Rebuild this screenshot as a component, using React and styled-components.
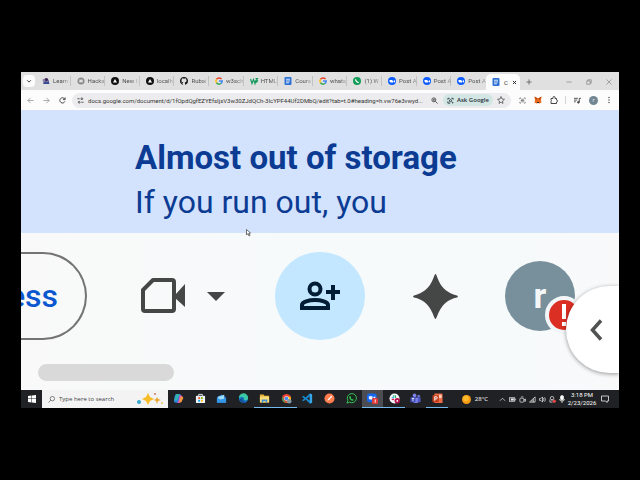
import React from "react";
import styled, { createGlobalStyle } from "styled-components";

const Global = createGlobalStyle`
  * { box-sizing: border-box; }
  body { margin: 0; background: #000; font-family: "Open Sans", "Noto Sans", sans-serif; }
  button, input { font: inherit; color: inherit; border: 0; padding: 0; margin: 0; background: none; outline: 0; }
  button { display: flex; align-items: center; justify-content: center; flex: none; }
  svg { display: block; flex: none; overflow: visible; }
`;

const Page = styled.main`
  min-height: 100vh;
  padding: 72px 21px;
  background: #000;
`;
const Desktop = styled.div`
  position: relative;
  overflow: hidden;
  background: #f9fafb;
`;

/* Browser chrome */
const TabStrip = styled.header`
  display: flex;
  align-items: flex-end;
  height: 18px;
  background: #e0e0e0;
  color: #444;
  font-family: Roboto, sans-serif;
  font-size: 6px;
`;
const TabSearch = styled.button`
  width: 12px;
  height: 12px;
  margin: 0 1px 3px 2px;
  border-radius: 4px;
  background: #fcfcfc;
`;
const Tabs = styled.nav`
  display: flex;
  flex: 0 1 450px;
  min-width: 0;
`;
const Tab = styled.a`
  display: flex;
  flex: 1 1 0;
  min-width: 0;
  align-items: center;
  gap: 3px;
  height: 10px;
  margin-bottom: 4px;
  padding-left: 6px;
  border-right: 1px solid #c3c3c3;
  color: #505050;
  text-decoration: none;
  &:last-child { border-color: transparent; }
`;
const TabLabel = styled.span`
  white-space: nowrap;
  line-height: 10px;
  mask-image: linear-gradient(90deg, #000 60%, rgba(0, 0, 0, 0.3));
`;
const ActiveTab = styled.div`
  display: flex;
  align-items: center;
  gap: 4px;
  width: 34px;
  height: 16px;
  padding: 0 4px 0 6px;
  border-radius: 5px 5px 0 0;
  background: #fcfcfd;
  color: #333;
`;
const NewTab = styled.button`
  width: 18px;
  height: 16px;
`;
const WindowControls = styled.div`
  display: flex;
  margin-left: auto;
`;
const WindowButton = styled.button`
  width: 20px;
  height: 17px;
`;
const Toolbar = styled.div`
  display: flex;
  align-items: center;
  height: 20px;
  padding: 0 6px 0 1px;
  background: #fcfcfd;
  color: #444;
`;
const ToolButton = styled.button`
  width: ${(p) => p.$w || 16}px;
  height: 16px;
`;
const Omnibox = styled.form`
  display: flex;
  flex: 1 1 0;
  min-width: 0;
  align-items: center;
  height: 15px;
  margin: 0 4px 0 2px;
  padding: 0 2px;
  border-radius: 8px;
  background: #ececee;
`;
const UrlInput = styled.input`
  flex: 1 1 0;
  min-width: 0;
  height: 13px;
  margin-left: 2px;
  color: #333;
  font-family: Roboto, sans-serif;
  font-size: 6px;
`;
const AskGoogle = styled.button`
  gap: 3px;
  height: 12px;
  padding: 0 4px;
  border-radius: 6px;
  background: #d3e6e4;
  color: #263238;
  font-size: 6px;
  font-weight: 600;
`;
const Divider = styled.span`
  width: 1px;
  height: 8px;
  margin: 0 3px;
  background: #d3d3d3;
`;
const Profile = styled.button`
  width: 9px;
  height: 9px;
  margin: 0 6px 0 4px;
  border-radius: 50%;
  background: #718692;
  color: #fff;
  font-size: 5px;
`;

/* Document page */
const Banner = styled.section`
  height: 123px;
  padding: 26px 114px;
  background: #d3e3fd;
  color: #0b3b93;
  font-family: Roboto, sans-serif;
  white-space: nowrap;
`;
const BannerTitle = styled.h1`
  margin: 0;
  font-size: 33px;
  line-height: 44px;
  font-weight: 700;
`;
const BannerText = styled.p`
  margin: 0;
  font-size: 32px;
  line-height: 44px;
`;
const DocHeader = styled.section`
  position: relative;
  padding: 19px 0 9px;
  background: linear-gradient(90deg, #f9f9f9, #f6fafb 55%, #f6fafb 80%, #f9f9fa);
`;
const Actions = styled.div`
  display: flex;
  align-items: center;
  height: 88px;
`;
const PillButton = styled.button`
  && { justify-content: flex-end; }
  width: 66px;
  height: 88px;
  padding-right: 27px;
  overflow: hidden;
  border: 2px solid #747474;
  border-left: 0;
  border-radius: 0 44px 44px 0;
  color: #0b57d0;
  font-family: Roboto, sans-serif;
  font-size: 32px;
  font-weight: 500;
`;
const VideoButton = styled.button`
  margin-left: 54px;
`;
const CaretButton = styled.button`
  margin-left: 22px;
`;
const ShareButton = styled.button`
  width: 90px;
  height: 88px;
  margin-left: 50px;
  border-radius: 50%;
  background: #c2e7ff;
`;
const SparkButton = styled.button`
  margin-left: 48px;
`;
const Account = styled.button`
  position: relative;
  width: 70px;
  height: 70px;
  margin-left: 47px;
  border-radius: 50%;
  background: #78909c;
  color: #f4f7f8;
  font-family: Roboto, sans-serif;
  font-size: 35px;
  font-weight: 700;
`;
const AlertBadge = styled.span`
  position: absolute;
  right: -8px;
  bottom: -3px;
  display: flex;
  align-items: center;
  justify-content: center;
  width: 38px;
  height: 38px;
  border: 4px solid #f3f6f8;
  border-radius: 50%;
  background: #dc2f24;
`;
const SidePanelToggle = styled.button`
  && { justify-content: flex-start; }
  position: absolute;
  top: 53px;
  right: 0;
  width: 53px;
  height: 87px;
  padding-left: 24px;
  border-radius: 44px 0 0 44px;
  background: #fff;
  box-shadow: 0 1px 4px rgba(0, 0, 0, 0.4);
`;
const ScrollThumb = styled.div`
  width: 136px;
  height: 17px;
  margin: 24px 0 0 17px;
  border-radius: 9px;
  background: #d9d9d9;
`;
const Pointer = styled.svg`
  position: absolute;
  left: 225px;
  top: 157px;
`;

/* Taskbar */
const Taskbar = styled.footer`
  display: flex;
  height: 18px;
  background: #202124;
  color: #fff;
`;
const StartButton = styled.button`
  width: 21px;
`;
const SearchBox = styled.label`
  display: flex;
  flex: none;
  align-items: center;
  gap: 4px;
  width: 126px;
  padding: 0 4px 0 6px;
  background: #f3f3f3;
  color: #555;
`;
const SearchInput = styled.input`
  flex: 1;
  min-width: 0;
  font-size: 6px;
  &::placeholder { color: #444; opacity: 1; }
`;
const Apps = styled.nav`
  display: flex;
  flex: 0 1 280px;
`;
const AppButton = styled.button`
  && { flex: 1 1 0; }
  height: 18px;
  background: ${(p) => (p.$active ? "#4b4d52" : "transparent")};
  border-bottom: 1px solid ${(p) => (p.$open ? "#76b9ed" : "transparent")};
`;
const Tray = styled.div`
  display: flex;
  flex: 1;
  align-items: center;
  justify-content: flex-end;
  color: #fff;
  font-size: 6px;
`;
const Weather = styled.button`
  gap: 4px;
  margin-right: 9px;
`;
const TrayButton = styled.button`
  width: ${(p) => p.$w || 10}px;
  height: 18px;
`;
const Clock = styled.time`
  width: 30px;
  font-family: Roboto, sans-serif;
  font-size: 6px;
  line-height: 8px;
  text-align: center;
  white-space: nowrap;
`;

const Stroke = ({ size = 8, d, width = 1.6, color = "#555" }) => (
  <svg width={size} height={size} viewBox="0 0 16 16" fill="none" stroke={color} strokeWidth={width}>
    <path d={d} />
  </svg>
);

const CLOSE = "M3 3l10 10M13 3L3 13";

const favicons = {
  learn: (
    <>
      <path d="M1 5l7-3 6 4v8H3z" fill="#8a7fa8" />
      <circle cx="9" cy="5" r="3" fill="#33224e" />
      <path d="M2 14l5-6 3 3 3-3 2 6z" fill="#344a95" />
    </>
  ),
  hack: (
    <>
      <circle cx="8" cy="8" r="7" fill="#8a8a8a" />
      <path d="M5 5h2v2h2V5h2v6H9V9H7v2H5z" fill="#fff" />
    </>
  ),
  next: (
    <>
      <circle cx="8" cy="8" r="8" fill="#111" />
      <path d="M8 4l4 7H4z" fill="#fff" />
    </>
  ),
  github: (
    <path
      fill="#181717"
      d="M8 0a8 8 0 0 0-2.5 15.6c.4 0 .5-.2.5-.4v-2c-2.2.5-2.7-1-2.7-1-.4-.8-.9-1-.9-1-.7-.6.1-.6.1-.6.8.1 1.2.8 1.2.8.7 1.3 1.9.9 2.4.7 0-.5.2-.9.5-1.1-1.8-.2-3.7-.9-3.7-4 0-.9.3-1.6.8-2.1 0-.3-.3-1.1.1-2.2 0 0 .7-.2 2.2.8a8 8 0 0 1 4 0c1.5-1 2.2-.8 2.2-.8.4 1.1.1 1.9.1 2.2.5.5.8 1.2.8 2.1 0 3.1-1.9 3.8-3.7 4 .3.3.6.8.6 1.5v2.7c0 .2.1.5.5.4A8 8 0 0 0 8 0z"
    />
  ),
  google: (
    <g fill="none" strokeWidth="3">
      <path d="M13 4A6.3 6.3 0 0 0 3 4.5" stroke="#ea4335" />
      <path d="M3 4.5a6.3 6.3 0 0 0 0 7" stroke="#fbbc05" />
      <path d="M3 11.5A6.3 6.3 0 0 0 12 13" stroke="#34a853" />
      <path d="M12 13a6.3 6.3 0 0 0 2.3-5H8" stroke="#4285f4" />
    </g>
  ),
  w3: (
    <path d="M1 4l3 9 3-8 3 8 2-7M11 3h4l-2 3 2 2-3 3" fill="none" stroke="#16995d" strokeWidth="2.4" />
  ),
  docs: (
    <>
      <rect x="1" y="0" width="14" height="16" rx="2" fill="#2f72d6" />
      <path d="M4 4.5h8M4 8h8M4 11.5h6" stroke="#fff" strokeWidth="1.6" />
    </>
  ),
  whatsapp: (
    <>
      <circle cx="8" cy="8" r="8" fill="#139c57" />
      <path d="M6 4l1 3 2 2 3 1-1 2c-4 0-7-4-7-7z" fill="#fff" />
    </>
  ),
  zoom: (
    <>
      <circle cx="8" cy="8" r="8" fill="#0b5cff" />
      <path d="M3 6h5l2 2v3H5L3 9zM11 8l3-2v5l-3-1z" fill="#fff" />
    </>
  ),
};

const Favicon = ({ kind, size = 8 }) => (
  <svg width={size} height={size} viewBox="0 0 16 16">{favicons[kind]}</svg>
);

const tabs = [
  ["learn", "Learn"],
  ["hack", "Hacka"],
  ["next", "New I"],
  ["next", "localh"],
  ["github", "Rubai"],
  ["google", "w3sch"],
  ["w3", "HTML"],
  ["docs", "Cours"],
  ["google", "whats"],
  ["whatsapp", "(1) W"],
  ["zoom", "Post A"],
  ["zoom", "Post A"],
  ["zoom", "Post A"],
];

const apps = [
  {
    name: "Copilot",
    art: (
      <>
        <path d="M7 2h8q2 0 2 3l-4 12q-1 4-4 4H7q-6 0-5-6l2-9q1-4 3-4z" fill="#2a86d9" />
        <path d="M7 2h7l-5 14H3z" fill="#35b5a9" />
        <path d="M14 5h4l4 5-4 9q-2 3-6 3H8q3-1 4-5z" fill="#d55ac1" />
        <path d="M17 7q6 0 5 5l-4 8h-5z" fill="#f4953b" />
      </>
    ),
  },
  {
    name: "Store",
    art: (
      <>
        <path d="M8 6V3h8v3" fill="none" stroke="#e8edf2" strokeWidth="2" />
        <rect x="2" y="6" width="20" height="16" rx="2" fill="#edf3f8" />
        <path d="M7 9h4v4H7z" fill="#f35325" /><path d="M13 9h4v4h-4z" fill="#81bc06" />
        <path d="M7 15h4v4H7z" fill="#05a6f0" /><path d="M13 15h4v4h-4z" fill="#ffba08" />
      </>
    ),
  },
  {
    name: "Mail",
    art: (
      <>
        <path d="M2 9l10-6 10 6v12H2z" fill="#1769c5" />
        <path d="M4 8l14-4v9L4 16z" fill="#9edcf8" />
        <path d="M2 10l10 6 10-6v11H2z" fill="#3498e7" />
      </>
    ),
  },
  {
    name: "Edge",
    art: (
      <>
        <circle cx="12" cy="12" r="10" fill="#1878c8" />
        <path d="M2 11a10 10 0 0 1 20-1c1 6-6 7-9 4 3-4-4-8-11-3z" fill="#3bc9a8" />
        <path d="M10 11c-2 5 3 9 9 8-5 5-14 3-15-3 0-3 3-5 6-5z" fill="#135193" />
      </>
    ),
  },
  {
    name: "File Explorer",
    open: true,
    art: (
      <>
        <path d="M2 3h8l2 3h10v15H2z" fill="#e9b73b" />
        <path d="M2 8h20v12H2z" fill="#fbdc78" />
        <path d="M6 14h12v7h-3v-3H9v3H6z" fill="#3e91d2" />
      </>
    ),
  },
  {
    name: "Chrome",
    open: true,
    art: (
      <>
        <circle cx="12" cy="12" r="10" fill="#e94235" />
        <path d="M3 8l6 12 3 2A10 10 0 0 1 3 8z" fill="#34a853" />
        <path d="M12 8h9a10 10 0 0 1-9 14l4-8z" fill="#fbbc05" />
        <circle cx="12" cy="12" r="5" fill="#fff" /><circle cx="12" cy="12" r="4" fill="#4285f4" />
        <circle cx="18" cy="18" r="5" fill="#8198a3" />
      </>
    ),
  },
  {
    name: "Visual Studio Code",
    art: (
      <>
        <path d="M17 1l5 2v18l-5 2L8 14l-5 4-2-1v-2l4-3-4-3V7l2-1 5 4zM17 7l-6 5 6 5z" fill="#1689cf" fillRule="evenodd" />
        <path d="M17 1l5 2v18l-5 2z" fill="#37a5e8" />
      </>
    ),
  },
  {
    name: "Postman",
    art: (
      <>
        <circle cx="12" cy="12" r="11" fill="#ff7d4d" />
        <path d="M7 17l2-4 7-7 2 2-7 7z" fill="#fff" />
      </>
    ),
  },
  {
    name: "WhatsApp",
    art: (
      <>
        <path d="M2 22l2-6a10 10 0 1 1 4 4z" fill="#17291c" stroke="#3cc85a" strokeWidth="2" />
        <path d="M8 7h2l1 3-1 1 3 3 2-1 2 2-2 2c-4 0-8-4-8-8z" fill="#3cc85a" />
      </>
    ),
  },
  {
    name: "Zoom",
    open: true,
    active: true,
    art: (
      <>
        <rect x="0" y="1" width="21" height="19" rx="5" fill="#1768ef" />
        <path d="M4 7h8v7H6l-2-2zM14 9l4-2v6l-4-1z" fill="#fff" />
        <rect x="11" y="11" width="13" height="13" rx="3" fill="#e23b3b" />
        <path d="M18 14v7" stroke="#fff" strokeWidth="2" />
      </>
    ),
  },
  {
    name: "Slack",
    open: true,
    art: (
      <>
        <circle cx="12" cy="12" r="11" fill="#f8f8f8" />
        <path d="M6 10h5" stroke="#36c5f0" strokeWidth="3" /><path d="M10 5v3" stroke="#2eb67d" strokeWidth="3" />
        <path d="M14 5v6" stroke="#2eb67d" strokeWidth="3" /><path d="M6 14h5" stroke="#e01e5a" strokeWidth="3" />
        <circle cx="18" cy="17" r="6" fill="#b4144d" /><circle cx="18" cy="17" r="2" fill="#fff" />
      </>
    ),
  },
  {
    name: "Teams",
    art: (
      <>
        <circle cx="10" cy="5" r="4" fill="#7b83eb" /><circle cx="19" cy="7" r="3" fill="#646ccc" />
        <path d="M15 10h8v10h-6z" fill="#5059c9" /><path d="M4 10h13v12H8z" fill="#7b83eb" />
        <rect x="1" y="9" width="11" height="11" rx="1" fill="#4550b8" />
        <path d="M4 12h5M6.500 12v6" stroke="#fff" strokeWidth="1.6" />
      </>
    ),
  },
  {
    name: "PowerPoint",
    open: true,
    art: (
      <>
        <rect x="5" y="1" width="18" height="21" rx="1" fill="#ed6c47" />
        <path d="M15 4h6v7h-6z" fill="#ffd1bf" />
        <rect x="1" y="5" width="14" height="15" rx="1" fill="#c43e1c" />
        <path d="M6 17V8h3a2 2 0 0 1 0 5H6" fill="none" stroke="#fff" strokeWidth="2" />
      </>
    ),
  },
];

const TrayIcon = ({ children, size = 7 }) => (
  <svg width={size} height={size} viewBox="0 0 16 16" fill="none" stroke="#eee" strokeWidth="1.6">{children}</svg>
);

function BrowserTabs() {
  return (
    <TabStrip>
      <TabSearch aria-label="Search tabs"><Stroke size={6} d="M3 6l5 5 5-5" width={2.5} color="#333" /></TabSearch>
      <Tabs aria-label="Open tabs">
        {tabs.map(([kind, label], i) => (
          <Tab href="#" key={i}><Favicon kind={kind} /><TabLabel>{label}</TabLabel></Tab>
        ))}
      </Tabs>
      <ActiveTab>
        <Favicon kind="docs" />
        <span>C</span>
        <button aria-label="Close tab"><Stroke size={5} d={CLOSE} width={3} color="#222" /></button>
      </ActiveTab>
      <NewTab aria-label="New tab"><Stroke size={6} d="M8 1v14M1 8h14" width={2} /></NewTab>
      <WindowControls>
        <WindowButton aria-label="Minimize"><Stroke size={6} d="M1 8h14" color="#777" /></WindowButton>
        <WindowButton aria-label="Restore"><Stroke size={6} d="M2 5h9v9H2zM5 5V2h9v9h-3" color="#777" /></WindowButton>
        <WindowButton aria-label="Close"><Stroke size={6} d="M1 1l14 14M15 1L1 15" color="#777" /></WindowButton>
      </WindowControls>
    </TabStrip>
  );
}

function BrowserToolbar() {
  return (
    <Toolbar>
      <ToolButton aria-label="Back"><Stroke size={7} d="M15 8H2M8 2L2 8l6 6" color="#888" /></ToolButton>
      <ToolButton aria-label="Forward"><Stroke size={7} d="M1 8h13M8 2l6 6-6 6" color="#888" /></ToolButton>
      <ToolButton aria-label="Reload"><Stroke size={7} d="M13.5 10A6 6 0 1 1 13 4.500M14 1v5H9" width={2} color="#333" /></ToolButton>
      <Omnibox onSubmit={(e) => e.preventDefault()}>
        <ToolButton $w={12} type="button" aria-label="Site information">
          <Stroke size={7} d="M1 4h5M9 4a2 2 0 1 0 4 0 2 2 0 0 0-4 0M15 12h-5M3 12a2 2 0 1 0 4 0 2 2 0 0 0-4 0" width={2} color="#444" />
        </ToolButton>
        <UrlInput
          aria-label="Address"
          defaultValue="docs.google.com/document/d/1fOpdQgfEZYEfsIjsV3w30ZJdQCh-3IcYPF44Uf2DMbQ/edit?tab=t.0#heading=h.vw76e3vwyd..."
        />
        <ToolButton $w={16} type="button" aria-label="Zoom">
          <Stroke size={7} d="M11 6.5a4.500 4.500 0 1 0-9 0 4.500 4.500 0 0 0 9 0M10 10l5 5M4.500 6.500h4M6.500 4.500v4" width={2} color="#444" />
        </ToolButton>
        <AskGoogle type="button">
          <svg width="7" height="7" viewBox="0 0 16 16" fill="none" stroke="#263238" strokeWidth="2">
            <path d="M2 6V3h4M10 3h4v3M2 10v4h5" /><circle cx="8" cy="8.5" r="2.5" /><circle cx="13" cy="13" r="1" />
          </svg>
          Ask Google
        </AskGoogle>
        <ToolButton $w={16} type="button" aria-label="Bookmark">
          <Stroke size={8} d="M8 1l2 5 5 .5-4 3.500 1 5-4-3-4 3 1-5-4-3.500L6 6z" />
        </ToolButton>
      </Omnibox>
      <ToolButton $w={14} aria-label="Extension">
        <Stroke size={7} d="M4 2H2v3M12 2h2v3M4 14H2v-3M12 14h2v-3M4 8h8M5 5h6M5 11h6" />
      </ToolButton>
      <ToolButton $w={17} aria-label="MetaMask">
        <svg width="8" height="8" viewBox="0 0 16 16">
          <path d="M1 1l5 3h4l5-3-1 8 1 4-4 2-3-1-3 1-4-2 1-4z" fill="#e8691e" />
          <path d="M1 1l5 3-1 4zM15 1l-5 3 1 4z" fill="#9f3d12" /><path d="M6 12h4v2H6z" fill="#3c241b" />
        </svg>
      </ToolButton>
      <ToolButton aria-label="Extensions">
        <Stroke size={8} d="M2 5h4V3a2 2 0 0 1 4 0v2h3v3a2 2 0 0 1 0 4v3H2v-4a2 2 0 0 0 0-3z" width={2} color="#444" />
      </ToolButton>
      <Divider />
      <ToolButton aria-label="Media controls">
        <svg width="7" height="7" viewBox="0 0 16 16" fill="none" stroke="#444" strokeWidth="2">
          <path d="M0 3h9M0 7h7M0 11h4M12 12V3h4" /><circle cx="10" cy="12" r="2" fill="#444" />
        </svg>
      </ToolButton>
      <Profile aria-label="Profile">r</Profile>
      <ToolButton $w={9} aria-label="Menu">
        <svg width="8" height="8" viewBox="0 0 16 16" fill="#555">
          <circle cx="8" cy="3" r="1.5" /><circle cx="8" cy="8" r="1.5" /><circle cx="8" cy="13" r="1.5" />
        </svg>
      </ToolButton>
    </Toolbar>
  );
}

function DocumentHeader() {
  return (
    <DocHeader>
      <Actions>
        <PillButton>ess</PillButton>
        <VideoButton aria-label="Start a call">
          <svg width="44" height="36" viewBox="0 0 44 36">
            <path d="M12 2h19q2 0 2 2v27q0 2-2 2H4q-2 0-2-2V12z" fill="none" stroke="#444746" strokeWidth="4" strokeLinejoin="round" />
            <path d="M34 17L44 6v23L34 20z" fill="#444746" />
          </svg>
        </VideoButton>
        <CaretButton aria-label="Call options">
          <svg width="18" height="9" viewBox="0 0 18 9"><path d="M0 0h18L9 9z" fill="#444746" /></svg>
        </CaretButton>
        <ShareButton aria-label="Share">
          <svg width="40" height="30" viewBox="0 0 40 30" fill="none" stroke="#001d35" strokeWidth="4">
            <ellipse cx="15" cy="8" rx="5.5" ry="5.5" />
            <path d="M2 27v-3c0-3 7-5 13-5s13 2 13 5v3z" /><path d="M33 4v15M26 11h14" />
          </svg>
        </ShareButton>
        <SparkButton aria-label="Gemini">
          <svg width="45" height="45" viewBox="0 0 45 45">
            <path d="M22.5 0C24.500 0 25 17 44 21.500c1.200.5 1.200 1.500 0 2C26 27 24.500 45 22.500 45S19 27 1 23.500c-1.200-.5-1.200-1.500 0-2C20 17 20.500 0 22.500 0z" fill="#444746" />
          </svg>
        </SparkButton>
        <Account aria-label="Account">
          r
          <AlertBadge>
            <svg width="6" height="24" viewBox="0 0 6 24" fill="#fff"><path d="M1 1h4v15H1zM1 19h4v4H1z" /></svg>
          </AlertBadge>
        </Account>
      </Actions>
      <SidePanelToggle aria-label="Show side panel">
        <svg width="13" height="22" viewBox="0 0 13 22"><path d="M11 1.5L2.500 11l8.500 9.500" fill="none" stroke="#505352" strokeWidth="3.5" /></svg>
      </SidePanelToggle>
      <ScrollThumb />
    </DocHeader>
  );
}

function WindowsTaskbar() {
  return (
    <Taskbar>
      <StartButton aria-label="Start">
        <svg width="8" height="8" viewBox="0 0 16 16" fill="#fff">
          <path d="M0 2l7-1v6H0zM8 1l8-1v7H8zM0 8h7v7l-7-1zM8 8h8v8l-8-1z" />
        </svg>
      </StartButton>
      <SearchBox>
        <Stroke size={7} d="M15 6a5 5 0 1 0-10 0 5 5 0 0 0 10 0M6.500 9.500L1 15" />
        <SearchInput aria-label="Type here to search" placeholder="Type here to search" />
        <svg width="28" height="14" viewBox="0 0 28 14">
          <path d="M12 1l2 4 4 2-4 2-2 4-2-4-4-2 4-2z" fill="#f6bd27" />
          <path d="M21 5l1 2 3 1-3 1-1 3-1-3-2-1 2-1z" fill="#eba42a" />
          <circle cx="3" cy="10" r="2" fill="#35a8cf" /><circle cx="19" cy="2" r="1" fill="#d57761" /><circle cx="26" cy="11" r="1" fill="#edc75a" />
        </svg>
      </SearchBox>
      <Apps aria-label="Applications">
        {apps.map((app) => (
          <AppButton key={app.name} aria-label={app.name} $open={app.open} $active={app.active}>
            <svg width="11" height="11" viewBox="0 0 24 24">{app.art}</svg>
          </AppButton>
        ))}
      </Apps>
      <Tray>
        <Weather>
          <svg width="9" height="9" viewBox="0 0 16 16"><circle cx="8" cy="8" r="8" fill="#f59a12" /><circle cx="7" cy="6" r="5" fill="#ffb92c" /></svg>
          28°C
        </Weather>
        <TrayButton aria-label="Show hidden icons"><Stroke size={7} d="M2 11l6-6 6 6" color="#eee" /></TrayButton>
        <TrayButton aria-label="Battery"><TrayIcon><rect x="1" y="4" width="12" height="8" /><path d="M4 8h7" strokeWidth="5" /><path d="M15 6v4" /></TrayIcon></TrayButton>
        <TrayButton aria-label="Meet now"><TrayIcon><rect x="2" y="5" width="9" height="9" rx="2" /><path d="M11 9l4-2v5l-4-1M5 2h5" /></TrayIcon></TrayButton>
        <TrayButton aria-label="Network"><TrayIcon><path d="M1 14L14 2v12zM7 9v5M10 6v8" /></TrayIcon></TrayButton>
        <TrayButton aria-label="Volume"><TrayIcon><path d="M1 6h3l4-4v12l-4-4H1zM10 5q2 3 0 6M13 3q3 5 0 10" /></TrayIcon></TrayButton>
        <TrayButton aria-label="Security"><TrayIcon><circle cx="7" cy="5" r="4" /><path d="M2 8v6h6M5 9h4" /><circle cx="12" cy="12" r="3" fill="#e94747" stroke="#e94747" /></TrayIcon></TrayButton>
        <TrayButton aria-label="Microphone"><TrayIcon size={8}><rect x="5" y="1" width="6" height="9" rx="3" fill="#fff" /><path d="M3 8q0 4 5 4t5-4M8 12v4" /></TrayIcon></TrayButton>
        <Clock>3:18 PM<br />2/23/2026</Clock>
        <TrayButton $w={16} aria-label="Notifications"><TrayIcon size={8}><path d="M1 2h14v10h-3v3l-3-3H1z" /></TrayIcon></TrayButton>
        <TrayButton $w={6} aria-label="Show desktop" />
      </Tray>
    </Taskbar>
  );
}

export default function App() {
  return (
    <Page>
      <Global />
      <Desktop>
        <BrowserTabs />
        <BrowserToolbar />
        <Banner>
          <BannerTitle>Almost out of storage</BannerTitle>
          <BannerText>If you run out, you</BannerText>
        </Banner>
        <DocumentHeader />
        <WindowsTaskbar />
        <Pointer width="5" height="8" viewBox="0 0 10 16">
          <path d="M1 1v11l3-3 2 5 2-1-2-5h3z" fill="#fff" stroke="#444" strokeWidth="1.5" />
        </Pointer>
      </Desktop>
    </Page>
  );
}
